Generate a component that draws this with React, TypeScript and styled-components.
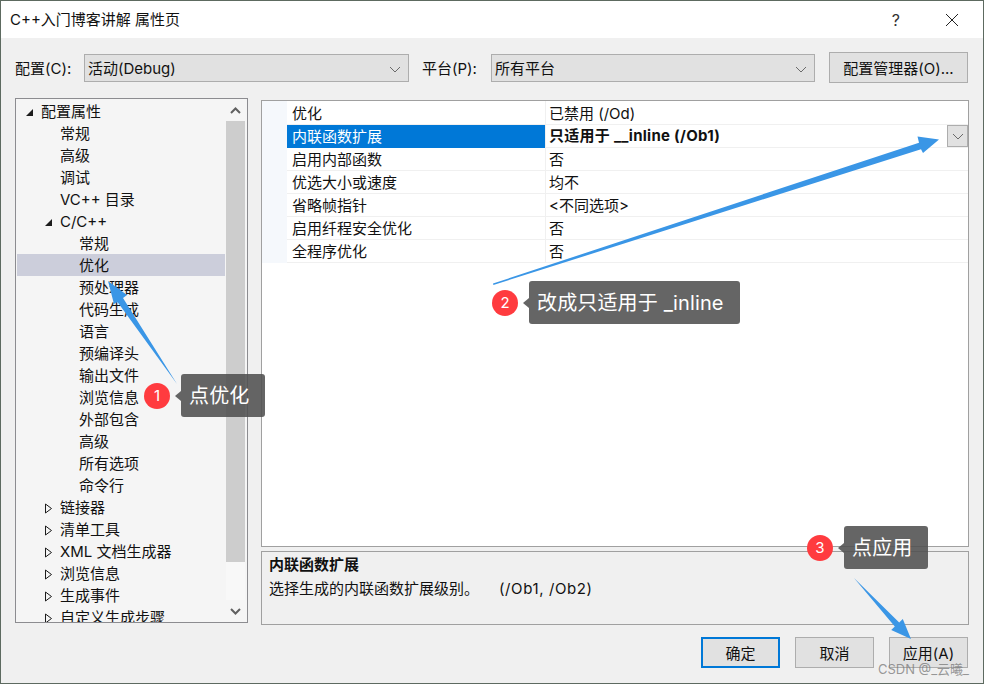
import React from 'react';
import styled, { createGlobalStyle } from 'styled-components';

const GlobalStyle = createGlobalStyle`
  html, body {
    margin: 0;
    padding: 0;
    background: #f0f0f0;
  }
  * {
    box-sizing: border-box;
  }
`;

interface TreeItem {
  label: string;
  depth: number;
  toggle?: 'open' | 'closed';
  selected?: boolean;
}

const treeItems: TreeItem[] = [
  { label: '配置属性', depth: 0, toggle: 'open' },
  { label: '常规', depth: 1 },
  { label: '高级', depth: 1 },
  { label: '调试', depth: 1 },
  { label: 'VC++ 目录', depth: 1 },
  { label: 'C/C++', depth: 1, toggle: 'open' },
  { label: '常规', depth: 2 },
  { label: '优化', depth: 2, selected: true },
  { label: '预处理器', depth: 2 },
  { label: '代码生成', depth: 2 },
  { label: '语言', depth: 2 },
  { label: '预编译头', depth: 2 },
  { label: '输出文件', depth: 2 },
  { label: '浏览信息', depth: 2 },
  { label: '外部包含', depth: 2 },
  { label: '高级', depth: 2 },
  { label: '所有选项', depth: 2 },
  { label: '命令行', depth: 2 },
  { label: '链接器', depth: 1, toggle: 'closed' },
  { label: '清单工具', depth: 1, toggle: 'closed' },
  { label: 'XML 文档生成器', depth: 1, toggle: 'closed' },
  { label: '浏览信息', depth: 1, toggle: 'closed' },
  { label: '生成事件', depth: 1, toggle: 'closed' },
  { label: '自定义生成步骤', depth: 1, toggle: 'closed' },
];

const properties = [
  { name: '优化', value: '已禁用 (/Od)' },
  { name: '内联函数扩展', value: '只适用于 __inline (/Ob1)', active: true },
  { name: '启用内部函数', value: '否' },
  { name: '优选大小或速度', value: '均不' },
  { name: '省略帧指针', value: '<不同选项>' },
  { name: '启用纤程安全优化', value: '否' },
  { name: '全程序优化', value: '否' },
];

const Chevron: React.FC = () => (
  <svg width="12" height="7" viewBox="0 0 12 7" fill="none">
    <path d="M1 1l5 5 5-5" stroke="#6a6a6a" strokeWidth="1" />
  </svg>
);

const App: React.FC = () => (
  <Dialog>
    <GlobalStyle />
    <TitleBar>
      <Title>C++入门博客讲解 属性页</Title>
      <HelpMark>?</HelpMark>
      <CloseIcon width="14" height="14" viewBox="0 0 14 14" fill="none">
        <path d="M1 1l12 12M13 1L1 13" stroke="#222" strokeWidth="1" />
      </CloseIcon>
    </TitleBar>

    <Body>
      <ConfigRow>
        <ConfigLabel>配置(C):</ConfigLabel>
        <Combo $width={325}>
          活动(Debug)
          <Chevron />
        </Combo>
        <ConfigLabel $gap={13}>平台(P):</ConfigLabel>
        <Combo $width={324}>
          所有平台
          <Chevron />
        </Combo>
        <ManagerButton>配置管理器(O)...</ManagerButton>
      </ConfigRow>

      <Content>
        <TreePanel>
          <TreeList>
            {treeItems.map((item, index) => (
              <TreeRow key={index} $depth={item.depth} $selected={item.selected}>
                <Toggle>
                  {item.toggle === 'open' && (
                    <svg width="9" height="9" viewBox="0 0 9 9">
                      <path d="M8 1v7H1z" fill="#1c1c1c" />
                    </svg>
                  )}
                  {item.toggle === 'closed' && (
                    <svg width="9" height="11" viewBox="0 0 9 11" fill="none">
                      <path d="M1.5 1v9l6-4.5z" stroke="#1c1c1c" strokeWidth="1" />
                    </svg>
                  )}
                </Toggle>
                {item.label}
              </TreeRow>
            ))}
          </TreeList>
          <ScrollBar>
            <ScrollButton>
              <svg width="11" height="7" viewBox="0 0 11 7" fill="none">
                <path d="M1 6l4.5-4.5L10 6" stroke="#606060" strokeWidth="2" />
              </svg>
            </ScrollButton>
            <ScrollThumb />
            <ScrollTrack />
            <ScrollButton>
              <svg width="11" height="7" viewBox="0 0 11 7" fill="none">
                <path d="M1 1l4.5 4.5L10 1" stroke="#606060" strokeWidth="2" />
              </svg>
            </ScrollButton>
          </ScrollBar>
        </TreePanel>

        <RightColumn>
          <PropertyGrid>
            {properties.map((prop) => (
              <PropertyRow key={prop.name}>
                <Gutter />
                <PropertyName $active={prop.active}>{prop.name}</PropertyName>
                <PropertyValue $active={prop.active}>
                  {prop.value}
                  {prop.active && (
                    <DropButton>
                      <Chevron />
                    </DropButton>
                  )}
                </PropertyValue>
              </PropertyRow>
            ))}
          </PropertyGrid>
          <Description>
            <DescriptionTitle>内联函数扩展</DescriptionTitle>
            <DescriptionText>
              选择生成的内联函数扩展级别。
              <DescriptionHint>(/Ob1, /Ob2)</DescriptionHint>
            </DescriptionText>
          </Description>
        </RightColumn>
      </Content>

      <Footer>
        <FooterButton $primary>确定</FooterButton>
        <FooterButton>取消</FooterButton>
        <FooterButton>应用(A)</FooterButton>
      </Footer>
    </Body>

    <ArrowLayer width="984" height="684" viewBox="0 0 984 684">
      <polygon points="177,384 123,298 127,295 108,281 114,304 117.5,302" fill="#3a96e6" />
      <polygon points="493,283.5 919,142.7 917.5,136.5 939,139.5 923,153 921,149.3 493.4,285" fill="#3a96e6" />
      <polygon points="854,578 899.2,622.4 902.8,619 911,639 891.2,629.9 894.8,626.4" fill="#3a96e6" />
    </ArrowLayer>

    <Callout $x={144} $y={374}>
      <Badge>1</Badge>
      <Bubble>点优化</Bubble>
    </Callout>
    <Callout $x={492} $y={281}>
      <Badge>2</Badge>
      <Bubble>改成只适用于 _inline</Bubble>
    </Callout>
    <Callout $x={807} $y={526}>
      <Badge>3</Badge>
      <Bubble>点应用</Bubble>
    </Callout>

    <Watermark>CSDN @_云曦_</Watermark>
  </Dialog>
);

export default App;

const fontStack = `Inter, "Noto Sans CJK SC", sans-serif`;

const Dialog = styled.div`
  position: relative;
  width: 984px;
  height: 684px;
  overflow: hidden;
  border: 1px solid #5d6a60;
  background: #f0f0f0;
  color: #111;
  font-family: ${fontStack};
  font-size: 15px;
  line-height: 20px;
`;

const TitleBar = styled.div`
  display: flex;
  align-items: center;
  height: 37px;
  padding: 0 24px 0 9px;
  background: #fff;
`;

const Title = styled.div`
  flex: 1;
  font-size: 15px;
`;

const HelpMark = styled.div`
  margin-right: 45px;
  font-size: 16px;
  color: #333;
`;

const CloseIcon = styled.svg`
  display: block;
`;

const Body = styled.div`
  padding: 14px 15px 0 14px;
`;

const ConfigRow = styled.div`
  display: flex;
  align-items: center;
  height: 32px;
`;

const ConfigLabel = styled.div<{ $gap?: number }>`
  width: 69px;
  flex: none;
  padding-top: 2px;
  margin-left: ${(p) => p.$gap || 0}px;
`;

const Combo = styled.div<{ $width: number }>`
  display: flex;
  align-items: center;
  justify-content: space-between;
  width: ${(p) => p.$width}px;
  height: 28px;
  padding: 2px 7px 0 3px;
  flex: none;
  background: #e1e1e1;
  border: 1px solid #adadad;
`;

const ManagerButton = styled.div`
  display: flex;
  align-items: center;
  justify-content: center;
  align-self: flex-start;
  width: 139px;
  height: 31px;
  padding-top: 2px;
  margin-left: 14px;
  background: #e1e1e1;
  border: 1px solid #adadad;
`;

const Content = styled.div`
  display: flex;
  height: 527px;
  margin-top: 14px;
`;

const TreePanel = styled.div`
  display: flex;
  width: 233px;
  height: 525px;
  flex: none;
  overflow: hidden;
  background: #f5f5f5;
  border: 1px solid #8c8c90;
`;

const TreeList = styled.div`
  width: 209px;
  flex: none;
  padding-top: 1px;
`;

const TreeRow = styled.div<{ $depth: number; $selected?: boolean }>`
  display: flex;
  align-items: center;
  height: 22px;
  padding-top: 2px;
  padding-left: ${(p) => 6 + p.$depth * 19}px;
  background: ${(p) => (p.$selected ? '#cccedb' : 'transparent')};
  margin-left: ${(p) => (p.$selected ? 1 : 0)}px;
  white-space: nowrap;
  ${(p) => (p.$selected ? 'text-indent: -1px;' : '')}
`;

const Toggle = styled.span`
  display: flex;
  align-items: center;
  width: 19px;
  padding-left: 3px;
  flex: none;
`;

const ScrollBar = styled.div`
  display: flex;
  flex-direction: column;
  flex: 1;
  padding-left: 1px;
  padding-right: 2px;
`;

const ScrollButton = styled.div`
  display: flex;
  align-items: center;
  justify-content: center;
  height: 22px;
  flex: none;
`;

const ScrollThumb = styled.div`
  height: 441px;
  flex: none;
  background: #cdcdcd;
`;

const ScrollTrack = styled.div`
  flex: 1;
  background: #f8f8f8;
`;

const RightColumn = styled.div`
  display: flex;
  flex-direction: column;
  gap: 4px;
  flex: 1;
  margin-left: 13px;
  margin-right: -1px;
  padding-top: 2px;
`;

const PropertyGrid = styled.div`
  height: 447px;
  flex: none;
  background: #fff;
  border: 1px solid #a0a0a0;
`;

const PropertyRow = styled.div`
  display: flex;
  height: 23px;
  border-bottom: 1px solid #f0f0f0;

  &:first-child {
    height: 24px;
  }
`;

const Gutter = styled.div`
  width: 25px;
  flex: none;
  margin-bottom: -1px;
  background: #f5f8fc;
`;

const PropertyName = styled.div<{ $active?: boolean }>`
  display: flex;
  align-items: center;
  width: 258px;
  padding-left: 5px;
  padding-top: ${(p) => (p.$active ? 0 : 2)}px;
  flex: none;
  margin-bottom: ${(p) => (p.$active ? -1 : 0)}px;
  background: ${(p) => (p.$active ? '#0078d7' : '#fff')};
  color: ${(p) => (p.$active ? '#fff' : 'inherit')};
`;

const PropertyValue = styled.div<{ $active?: boolean }>`
  display: flex;
  align-items: center;
  justify-content: space-between;
  flex: 1;
  padding-left: 3px;
  padding-top: ${(p) => (p.$active ? 0 : 2)}px;
  border-left: 1px solid #f0f0f0;
  font-weight: ${(p) => (p.$active ? 700 : 400)};
  letter-spacing: ${(p) => (p.$active ? '0.28px' : '0')};
`;

const DropButton = styled.div`
  display: flex;
  align-items: center;
  justify-content: center;
  width: 21px;
  height: 22px;
  background: #e1e1e1;
  border: 1px solid #adadad;
`;

const Description = styled.div`
  height: 74px;
  padding: 1px 7px 0;
  flex: none;
  border: 1px solid #a0a0a0;
`;

const DescriptionTitle = styled.div`
  height: 24px;
  line-height: 23px;
  font-weight: 700;
`;

const DescriptionText = styled.div`
  height: 23px;
  line-height: 23px;
`;

const DescriptionHint = styled.span`
  margin-left: 20px;
  letter-spacing: 0.6px;
`;

const Footer = styled.div`
  display: flex;
  justify-content: flex-end;
  gap: 15px;
  margin-top: 12px;
`;

const FooterButton = styled.div<{ $primary?: boolean }>`
  display: flex;
  align-items: center;
  justify-content: center;
  width: 79px;
  height: 31px;
  padding-top: 2px;
  background: #e1e1e1;
  border: ${(p) => (p.$primary ? '2px solid #0078d7' : '1px solid #adadad')};
`;

const ArrowLayer = styled.svg`
  position: absolute;
  left: -1px;
  top: -1px;
  pointer-events: none;
`;

const Callout = styled.div<{ $x: number; $y: number }>`
  position: absolute;
  left: ${(p) => p.$x - 1}px;
  top: ${(p) => p.$y - 1}px;
  display: flex;
  align-items: center;
  gap: 11px;
`;

const Badge = styled.div`
  display: flex;
  align-items: center;
  justify-content: center;
  width: 26px;
  height: 26px;
  border-radius: 50%;
  background: #ff3b3f;
  color: #fff;
  font-size: 15px;
`;

const Bubble = styled.div`
  position: relative;
  display: flex;
  align-items: center;
  height: 43px;
  padding: 0 16px 0 8px;
  border-radius: 3px;
  background: rgba(80, 80, 80, 0.88);
  color: #fff;
  font-size: 20px;
  letter-spacing: 0.15px;
  white-space: pre;

  &::before {
    content: '';
    position: absolute;
    left: -6px;
    top: 50%;
    margin-top: -5px;
    border-style: solid;
    border-width: 5px 6px 5px 0;
    border-color: transparent rgba(80, 80, 80, 0.88) transparent transparent;
  }
`;

const Watermark = styled.div`
  position: absolute;
  right: 14px;
  bottom: 4px;
  color: rgba(120, 120, 120, 0.75);
  font-size: 13px;
  white-space: nowrap;
`;
